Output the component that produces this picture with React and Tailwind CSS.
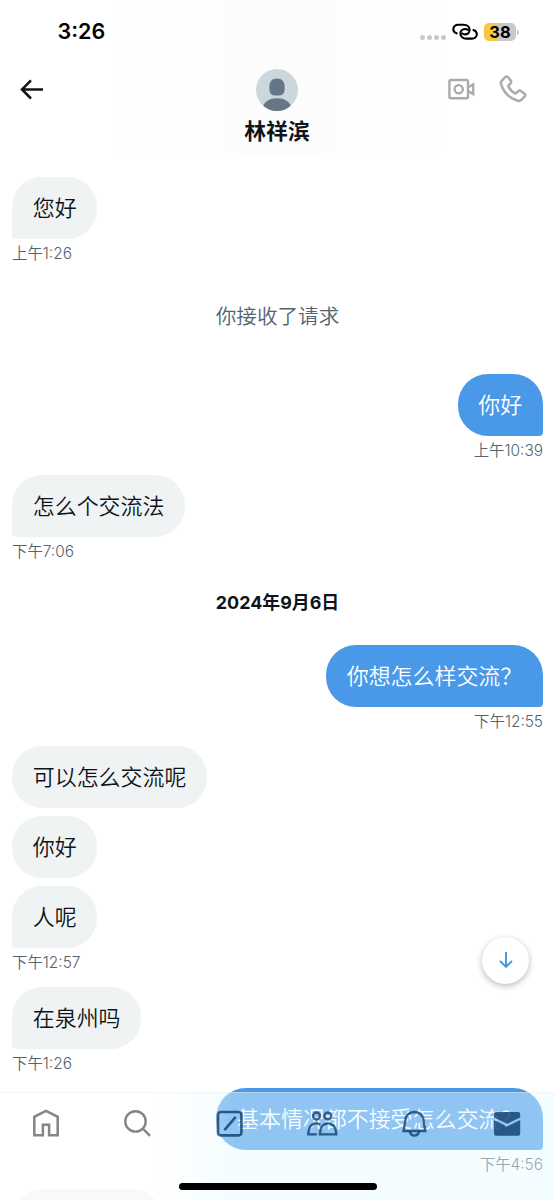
import React from "react";

const fontClass = "font-['Inter','Noto_Sans_CJK_SC',sans-serif]"

function Bubble({ text, mine, tail }) {
  const color = mine ? "bg-[#4a99e9] text-white" : "bg-[#eff3f4] text-[#0f1419]"
  const corner = tail ? (mine ? "rounded-br-[4px]" : "rounded-bl-[4px]") : ""
  return (
    <div className={`h-[62px] px-[20.8px] rounded-[30px] flex items-center text-[21.95px] leading-[30px] font-[350] whitespace-nowrap ${color} ${corner}`}>
      <p>{text}</p>
    </div>
  )
}

function MessageGroup({ messages, time, mine }) {
  return (
    <div className={`flex flex-col px-3 ${mine ? "items-end" : "items-start"}`}>
      <div className="flex flex-col items-start gap-2">
        {messages.map((text, i) => (
          <Bubble key={text} text={text} mine={mine} tail={i === messages.length - 1} />
        ))}
      </div>
      <p className="h-[39px] pt-[5px] text-[15.4px] leading-5 font-[350] text-[#536471]">{time}</p>
    </div>
  )
}

function StatusBar() {
  return (
    <div className="h-[62px] pt-[2px] flex items-center justify-between pl-[57.5px] pr-[39px]">
      <p className="text-[21.5px] font-semibold leading-none text-black">3:26</p>
      <div className="flex items-center">
        <div className="flex gap-[2px] mt-[11px] mr-[6px]">
          <span className="size-[5px] rounded-full bg-[#cacaca]"></span>
          <span className="size-[5px] rounded-full bg-[#cacaca]"></span>
          <span className="size-[5px] rounded-full bg-[#cacaca]"></span>
          <span className="size-[5px] rounded-full bg-[#cacaca]"></span>
        </div>
        <svg className="w-[26px] h-[18px] mr-[6px]" viewBox="0 0 26 18" fill="none" stroke="#000" strokeWidth="2.1" strokeLinecap="round">
          <path d="M4.6 10.3C2.6 9.6 1.3 8.1 1.3 6.2C1.3 3.6 3.5 1.8 6.2 1.8H11.6C15.2 1.8 17.6 3.9 17.6 6.8C17.6 9.7 15.6 11.4 13 11.4C11.9 11.4 11 11.1 10.3 10.5" />
          <path d="M21.4 7C23.5 7.7 24.8 9.3 24.8 11.2C24.8 13.8 22.6 15.6 19.9 15.6H14.4C10.9 15.6 8.4 13.5 8.4 10.6C8.4 7.8 10.5 6 13.1 6C14.2 6 15.1 6.3 15.8 6.9" />
        </svg>
        <div className="w-8 h-[18px] rounded-[5px] bg-linear-to-r from-[#f5c93d] from-40% to-[#c9c9cb] to-40% flex items-center justify-center">
          <span className="text-[16.5px] font-bold leading-none text-black">38</span>
        </div>
        <span className="w-[2px] h-[5px] ml-px -mr-[3px] rounded-r bg-[#c9c9cb]"></span>
      </div>
    </div>
  )
}

function Header() {
  return (
    <div className="h-[92px] grid grid-cols-[1fr_auto_1fr] pl-5 pr-7">
      <svg className="w-[78px] h-[22px] mt-4" viewBox="0 0 78 22" fill="none" stroke="#0f1419" strokeWidth="2.5">
        <path d="M23 11.4H2.5M11 2.3L2 11.4L11 20.5" />
      </svg>
      <div className="flex flex-col items-center pt-[7px] pl-[7px]">
        <svg className="size-[42px]" viewBox="0 0 42 42">
          <clipPath id="avatar"><circle cx="21" cy="21" r="21" /></clipPath>
          <g clipPath="url(#avatar)">
            <rect width="42" height="42" fill="#ccd6dd" />
            <path d="M13.3 18.5C13.3 12.5 15.9 9.4 21 9.4S28.7 12.5 28.7 18.5C28.7 24 27 26.4 23.5 26.4H18.5C15 26.4 13.3 24 13.3 18.5Z" fill="#657786" />
            <path d="M5 42C8 32 13 29.2 21 29.2S34 32 37 42Z" fill="#657786" />
          </g>
        </svg>
        <h1 className="mt-[5px] text-[21.8px] font-bold leading-[30px] text-[#0f1419]">林祥滨</h1>
      </div>
      <div className="flex justify-end gap-[24px] pt-[12px]">
        <svg className="w-7 h-7 mt-[1px]" viewBox="0 0 28 28" fill="none" stroke="#a9abad" strokeWidth="2.4">
          <rect x="2.4" y="5" width="18.6" height="18.3" rx="1.5" />
          <circle cx="11.7" cy="14.2" r="4.1" />
          <path d="M21 12.5L26.2 9.3V19.1L21 16" />
        </svg>
        <svg className="w-7 h-7 mt-px" viewBox="0 0 28 28" fill="none" stroke="#a9abad" strokeWidth="2.5" strokeLinejoin="round">
          <path d="M3 5.4L6 2.3C6.9 1.4 8.2 1.4 9.1 2.3L11.7 5.6C12.4 6.5 12.3 7.6 11.5 8.4L9.8 10.1C9.3 10.6 9.3 11.3 9.6 11.9C11 14.6 13.1 16.8 15.7 18.2C16.3 18.5 17 18.4 17.5 17.9L19.1 16.3C19.9 15.5 21 15.4 21.9 16.1L25.4 18.8C26.3 19.6 26.4 20.8 25.6 21.7L22.6 24.7C21.6 25.8 20.2 26.1 18.8 25.7C10.6 23.3 4.6 17.4 2.1 9.2C1.7 7.8 2 6.4 3 5.4Z" />
        </svg>
      </div>
    </div>
  )
}

function TabBar() {
  return (
    <div className="absolute left-0 bottom-0 w-[555px] h-[108px] bg-linear-to-r from-white/70 from-28% via-[#e6faff]/45 via-42% to-[#e6faff]/45">
      <div className="h-full border-t border-[#e6eaec]/40 flex flex-col justify-between items-center pb-[10px]">
        <div className="grid grid-cols-6 w-[553px] mr-[2px] pt-[15px] justify-items-center">
          <svg className="w-7 h-[30px]" viewBox="0 0 28 30" fill="none" stroke="#838586" strokeWidth="2.5">
            <path d="M2.3 27.3V8.8L14 2.8L25.7 8.8V27.3H17.1V16.7H10.9V27.3Z" />
          </svg>
          <svg className="w-7 h-[30px]" viewBox="0 0 28 30" fill="none" stroke="#838586" strokeWidth="2.4">
            <circle cx="11.5" cy="13.4" r="10.2" />
            <path d="M18.8 20.7L26 27.8" />
          </svg>
          <svg className="w-7 h-[30px]" viewBox="0 0 28 30" fill="none" stroke="#0c3c6c" strokeOpacity=".8" strokeWidth="2.6">
            <rect x="2" y="4" width="23.4" height="23.4" rx="2.8" />
            <path d="M8.4 22.2L19.7 8.8" />
          </svg>
          <svg className="w-8 h-[30px]" viewBox="1 0 32 30" fill="none" stroke="#0c3c6c" strokeOpacity=".78" strokeWidth="2.3">
            <circle cx="10.5" cy="8" r="3.5" />
            <circle cx="21.8" cy="8" r="3.5" />
            <path d="M10.8 26.4H2.2C2.6 18.9 5 15.3 10.2 15.3C12 15.3 13.3 15.8 14.3 16.8" />
            <path d="M13.9 26.4C14.3 18.9 16.8 15.3 22.1 15.3S29.9 18.9 30.3 26.4Z" />
          </svg>
          <svg className="w-7 h-[30px]" viewBox="0.5 0 28 30" fill="none" stroke="#0c3c6c" strokeOpacity=".78" strokeWidth="2.4">
            <path d="M4.8 13C4.8 7.6 8.7 4 13.9 4S23 7.6 23 13L24.8 23H3Z" />
            <path d="M9.3 23.3C9.8 26.1 11.5 27.6 13.9 27.6S18 26.1 18.5 23.3" />
          </svg>
          <svg className="w-7 h-[30px]" viewBox="0 0 28 30" fill="#0c3c6c" fillOpacity=".8">
            <path d="M1 6C1 4.9 1.9 4 3 4H25.2C26.3 4 27.2 4.9 27.2 6V9.4L14.1 15.8L1 9.4Z" />
            <path d="M1 12L14.1 18.4L27.2 12V25.8C27.2 26.9 26.3 27.8 25.2 27.8H3C1.9 27.8 1 26.9 1 25.8Z" />
          </svg>
        </div>
        <div className="w-[198px] h-[7px] rounded-full bg-black"></div>
      </div>
    </div>
  )
}

export default function App() {
  return (
    <div className={`relative w-[555px] h-[1200px] overflow-hidden bg-white ${fontClass}`} lang="zh-CN">
      <div className="h-[154px] bg-linear-to-r from-white from-20% via-[#fcfcfd] to-white to-80%">
        <StatusBar />
        <Header />
      </div>
      <div className="pt-[23px]">
        <MessageGroup messages={["您好"]} time="上午1:26" />
        <p className="h-24 pt-6 text-center text-[20.6px] leading-[30px] font-[350] text-[#536471]">你接收了请求</p>
        <MessageGroup messages={["你好"]} time="上午10:39" mine />
        <MessageGroup messages={["怎么个交流法"]} time="下午7:06" />
        <p className="h-[69px] pt-3 text-center text-[17.9px] font-bold leading-[30px] text-[#0f1419]">2024年9月6日</p>
        <MessageGroup messages={["你想怎么样交流？"]} time="下午12:55" mine />
        <MessageGroup messages={["可以怎么交流呢", "你好", "人呢"]} time="下午12:57" />
        <MessageGroup messages={["在泉州吗"]} time="下午1:26" />
        <MessageGroup messages={["基本情况都不接受怎么交流？"]} time="下午4:56" mine />
        {/* next message, cut off by the screen edge */}
        <div className="ml-3 w-[150px] h-[62px] rounded-[30px] bg-[#eaecf0]"></div>
      </div>
      {/* scroll to latest */}
      <button className="absolute left-[482px] top-[937px] size-[47px] rounded-full bg-white shadow-[0_2px_6px_rgba(0,0,0,0.28)] flex items-center justify-center pb-[2px]">
        <svg className="w-4 h-[18px]" viewBox="0 0 16 18" fill="none" stroke="#3f97dc" strokeWidth="1.9">
          <path d="M8 1V15.5M2 9.8L8 15.8L14 9.8" />
        </svg>
      </button>
      <TabBar />
    </div>
  );
}
